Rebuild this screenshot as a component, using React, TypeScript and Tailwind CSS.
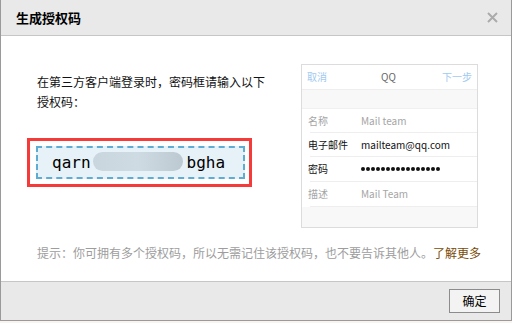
import React from "react";

const cjk = { fontFamily: '"Noto Sans CJK SC", "Liberation Sans", sans-serif' };
const mono = { fontFamily: '"DejaVu Sans Mono", "Liberation Mono", monospace' };

function Phone() {
  const dots = Array.from({ length: 16 });
  return (
    <div className="w-[177px] h-[164px] border border-[#dcdcdc] bg-white flex flex-col text-[10px] leading-none" style={cjk}>
      <div className="h-[25px] shrink-0 flex items-center justify-between px-[5px] border-b border-[#eeeeee]">
        <span className="text-[#9fcaf0]">取消</span>
        <span className="text-[#666] ml-[8px]">QQ</span>
        <span className="text-[#9fcaf0]">下一步</span>
      </div>
      <div className="h-[19px] shrink-0 bg-[#f8f8f8] border-b border-[#f0f0f0]" />
      <div className="flex flex-col pl-[8px]">
        <div className="h-[24px] flex items-center border-b border-[#eeeeee]">
          <span className="w-[53px] -ml-[2px] text-[#a5a5a5]">名称</span>
          <span className="text-[#a5a5a5]">Mail team</span>
        </div>
        <div className="h-[24px] flex items-center border-b border-[#eeeeee]">
          <span className="w-[53px] -ml-[2px] text-[#111]">电子邮件</span>
          <span className="text-[#111]">mailteam@qq.com</span>
        </div>
        <div className="h-[25px] flex items-center border-b border-[#eeeeee]">
          <span className="w-[53px] -ml-[2px] text-[#111]">密码</span>
          <span className="flex gap-[1px]">
            {dots.map((_, i) => (
              <span key={i} className="w-[4px] h-[4px] rounded-full bg-[#111]" />
            ))}
          </span>
        </div>
        <div className="h-[25px] flex items-center border-b border-[#eeeeee]">
          <span className="w-[53px] -ml-[2px] text-[#a5a5a5]">描述</span>
          <span className="text-[#a5a5a5]">Mail Team</span>
        </div>
      </div>
      <div className="flex-1 bg-[#f8f8f8]" />
    </div>
  );
}

export default function App() {
  return (
    <div className="w-[512px] h-[323px] bg-[#faf4ef]">
      <div className="w-[512px] h-[321px] border-l border-r border-b border-[#9a9a9a] bg-white flex flex-col" style={cjk}>
        <div className="h-[36px] shrink-0 bg-[#e9e9e9] border-b border-[#c6c6c6] flex items-center justify-between pl-[15px] pr-[13px]">
          <span className="text-[13px] font-bold text-black">生成授权码</span>
          <svg width="11" height="11" viewBox="0 0 11 11">
            <path d="M1 1 L10 10 M10 1 L1 10" stroke="#ababab" strokeWidth="2" />
          </svg>
        </div>
        <div className="flex-1 flex flex-col">
          <div className="flex pt-[28px] pl-[26px]">
            <div className="w-[274px] flex flex-col">
              <p className="pt-[8px] pl-[10px] w-[240px] text-[12px] leading-[20px] text-[#111]">
                在第三方客户端登录时，密码框请输入以下授权码：
              </p>
              <div className="mt-[26px] w-[225px] h-[49px] border-[3px] border-[#f53a3a] pl-[6px] pr-[4px] py-[5px]">
                <div className="h-full border-2 border-dashed border-[#5eabd3] bg-[#e7f1f8] flex items-center pl-[14px] text-[16px] text-black" style={mono}>
                  <span>qarn</span>
                  <span className="mx-[2px] w-[90px] h-[19px] rounded-full bg-gradient-to-r from-[#c9d6de] via-[#cfdbe2] to-[#bcc9d0] mt-[-2px]" />
                  <span className="ml-[2px]">bgha</span>
                </div>
              </div>
            </div>
            <Phone />
          </div>
          <p className="mt-[15px] pl-[36px] text-[12px] leading-[20px] text-[#9d9d9d]">
            提示：你可拥有多个授权码，所以无需记住该授权码，也不要告诉其他人。<span className="text-[#7a4c08]">了解更多</span>
          </p>
        </div>
        <div className="h-[39px] shrink-0 bg-[#e9e9e9] border-t border-[#c6c6c6] flex items-center justify-end pr-[11px]">
          <button className="w-[51px] h-[24px] border border-[#8c8c8c] bg-[#f3f3f3] text-[12px] text-black leading-none" style={cjk}>
            确定
          </button>
        </div>
      </div>
    </div>
  );
}
